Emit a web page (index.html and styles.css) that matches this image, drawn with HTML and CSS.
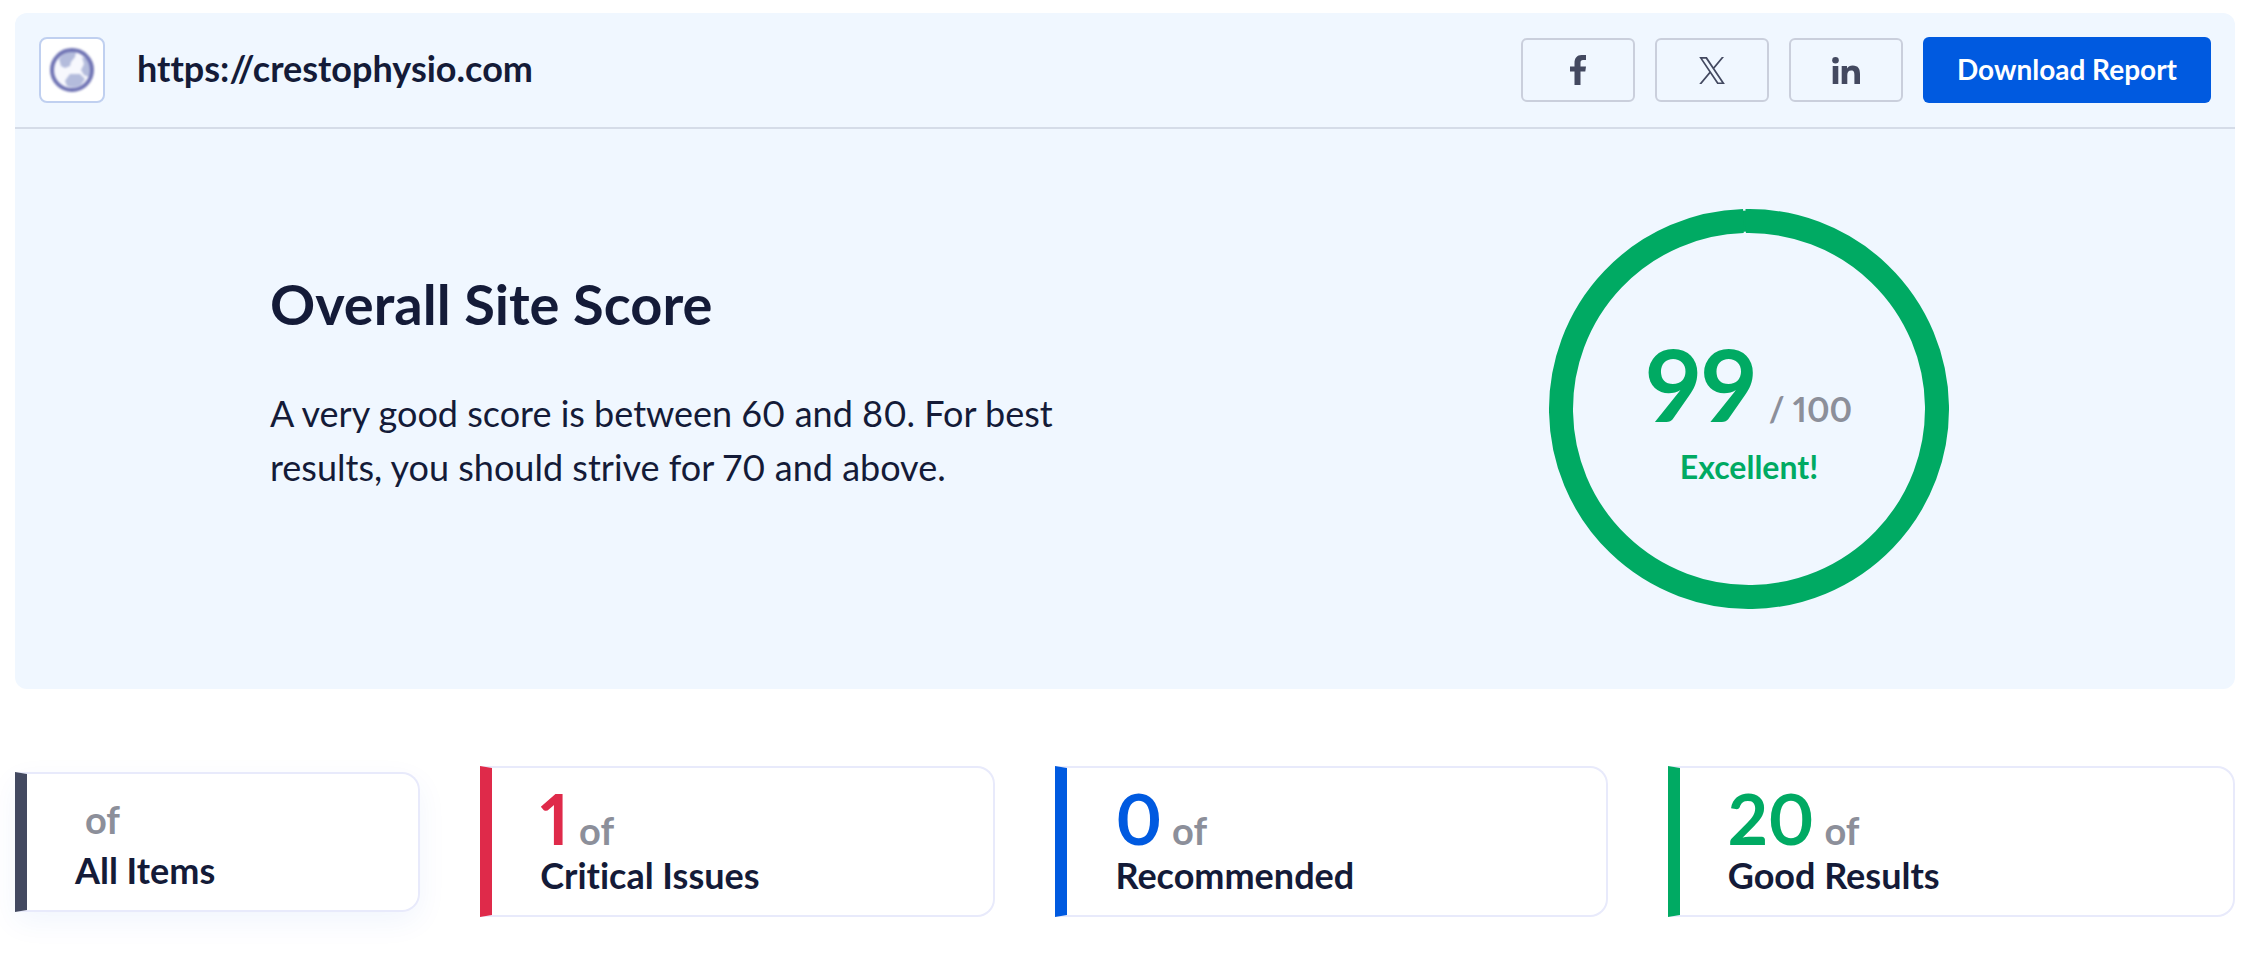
FILE: index.html
```html
<!DOCTYPE html>
<html lang="en">
<head>
<meta charset="utf-8">
<title>Site Report</title>
<link rel="stylesheet" href="styles.css">
</head>
<body>
<main class="report">
  <section class="panel">
    <header class="panel-header">
      <span class="favicon">
        <svg class="globe" viewBox="0 0 50 50" width="50" height="50" aria-hidden="true">
          <circle class="globe-sea" cx="25" cy="25" r="20"/>
          <path class="globe-land" d="M12 14C17 7 24 5 29 7L28 12L24 17L23 21L18 23L14 21ZM35 12L41 14C44 20 45 27 42 32L37 30L34 25L37 19ZM23 29L33 29L38 34L34 40C30 43 24 43 20 41L18 36L20 33Z"/>
          <circle class="globe-ring" cx="25" cy="25" r="20"/>
        </svg>
      </span>
      <h1 class="site-url">https://crestophysio.com</h1>
      <div class="actions">
        <button class="share" type="button" aria-label="Share on Facebook">
          <svg viewBox="0 0 16 30" width="16" height="30" aria-hidden="true"><path d="M4.500 30V16.500H0V11.500H4.500V8C4.500 3 7 0 11.500 0H16V5H13C11.300 5 10.500 6 10.500 7.500V11.500H16L15.300 16.500H10.500V30Z"/></svg>
        </button>
        <button class="share" type="button" aria-label="Share on X">
          <svg viewBox="0 0 26 27" width="26" height="27" aria-hidden="true"><path fill-rule="evenodd" d="M15.500 11.400L25 0H22.800L14.500 9.900L7.900 0H0.200L10.200 15L0.200 27H2.500L11.200 16.500L18.200 27H25.900ZM3.300 1.700H6.800L22.800 25.400H19.300Z"/></svg>
        </button>
        <button class="share" type="button" aria-label="Share on LinkedIn">
          <svg viewBox="0 0 28 27" width="28" height="27" aria-hidden="true"><circle cx="3.500" cy="3.300" r="3.300"/><path d="M0.700 9H6.300V27H0.700ZM9.700 9H15V11.500C16 9.700 18 8.500 20.700 8.500C26.300 8.500 28 12 28 17V27H22.400V18C22.400 15.500 22 13.400 19.200 13.400C16.400 13.400 15.300 15.300 15.300 18V27H9.700Z"/></svg>
        </button>
        <button class="download" type="button">Download Report</button>
      </div>
    </header>
    <div class="score">
      <div class="score-copy">
        <h2 class="score-title">Overall Site Score</h2>
        <p class="score-text">A very good score is between 60 and 80. For best results, you should strive for 70 and above.</p>
      </div>
      <div class="gauge-cell">
        <div class="gauge">
          <svg class="gauge-ring" viewBox="0 0 400 400" aria-hidden="true">
            <circle class="gauge-track" cx="200" cy="200" r="188"/>
            <circle class="gauge-value" cx="200" cy="200" r="188" pathLength="1000" stroke-dasharray="998 2" transform="rotate(-91 200 200)"/>
          </svg>
          <p class="gauge-number"><strong class="gauge-points">99</strong><span class="gauge-total">/ 100</span></p>
          <p class="gauge-label">Excellent!</p>
        </div>
      </div>
    </div>
  </section>
  <section class="cards">
    <article class="card card-all">
      <p class="count"><span class="of">of</span></p>
      <h3 class="card-title">All Items</h3>
    </article>
    <article class="card card-critical">
      <p class="count"><strong class="number">1</strong><span class="of">of</span></p>
      <h3 class="card-title">Critical Issues</h3>
    </article>
    <article class="card card-recommended">
      <p class="count"><strong class="number">0</strong><span class="of">of</span></p>
      <h3 class="card-title">Recommended</h3>
    </article>
    <article class="card card-good">
      <p class="count"><strong class="number">20</strong><span class="of">of</span></p>
      <h3 class="card-title">Good Results</h3>
    </article>
  </section>
</main>
</body>
</html>
```
FILE: styles.css
```css
* {
  box-sizing: border-box;
}

body {
  margin: 0;
  background: #fff;
  color: #141b38;
  font-family: Lato, "Open Sans", sans-serif;
  font-variant-ligatures: none;
  font-variant-numeric: proportional-nums;
}

h1, h2, h3, p {
  margin: 0;
}

.report {
  padding: 13px 13px 48px 15px;
}

.panel {
  background: #f0f7ff;
  border-radius: 12px;
}

.panel-header {
  display: flex;
  align-items: center;
  gap: 32px;
  padding: 24px;
  border-bottom: 2px solid #d5dce8;
}

.favicon {
  display: grid;
  place-items: center;
  width: 66px;
  height: 66px;
  border: 2px solid #c0d0f0;
  border-radius: 8px;
  background: #fff;
}

.globe {
  filter: blur(1px);
}

.globe-sea {
  fill: #f7f8fd;
}

.globe-land {
  fill: #b4bcdc;
}

.globe-ring {
  fill: none;
  stroke: #7074b4;
  stroke-width: 4;
}

.site-url {
  flex: 1;
  padding-bottom: 4px;
  font-size: 36px;
  font-weight: 700;
  line-height: 44px;
}

.actions {
  display: flex;
  align-items: center;
  gap: 20px;
}

.share {
  display: grid;
  place-items: center;
  width: 114px;
  height: 64px;
  padding: 0;
  border: 2px solid #cacfdc;
  border-radius: 6px;
  background: transparent;
}

.share svg {
  fill: #434960;
}

.download {
  height: 66px;
  padding: 0 34px 2px;
  border: 0;
  border-radius: 6px;
  background: #005ae0;
  color: #fff;
  font: 700 28px/34px Lato, "Open Sans", sans-serif;
}

.score {
  display: grid;
  grid-template-columns: 1fr 972px;
  align-items: center;
  padding: 80px 0;
}

.score-copy {
  max-width: 1080px;
  padding: 0 0 54px 255px;
}

.score-title {
  font-size: 56px;
  font-weight: 700;
  line-height: 68px;
}

.score-text {
  margin-top: 48px;
  font-size: 36px;
  line-height: 54px;
}

.gauge-cell {
  display: grid;
  place-items: center;
}

.gauge {
  position: relative;
  display: grid;
  place-items: center;
  align-content: center;
  width: 400px;
  height: 400px;
  padding-top: 8px;
}

.gauge-ring {
  position: absolute;
  inset: 0;
  width: 100%;
  height: 100%;
}

.gauge-track,
.gauge-value {
  fill: none;
  stroke: #00aa63;
}

.gauge-track {
  stroke-width: 21;
}

.gauge-value {
  stroke-width: 24;
}

.gauge-number {
  display: flex;
  align-items: baseline;
  gap: 12px;
  line-height: 96px;
}

.gauge-points {
  color: #00aa63;
  font-size: 100px;
  font-weight: 700;
}

.gauge-total {
  color: #8c8f9a;
  font-size: 34px;
  font-weight: 700;
  line-height: 34px;
}

.gauge-label {
  margin-top: 12px;
  color: #00aa63;
  font-size: 32px;
  font-weight: 700;
  line-height: 48px;
}

.cards {
  display: grid;
  grid-template-columns: 405fr 515fr 552fr 567fr;
  align-items: center;
  gap: 60px;
  margin-top: 77px;
}

.card {
  padding: 20px 48px;
  border: 2px solid #e8eafb;
  border-left: 12px solid;
  border-radius: 0 18px 18px 0;
}

.card-all {
  border-left-color: #434960;
  box-shadow: 0 10px 30px rgba(0, 90, 224, 0.06);
}

.card-critical {
  border-left-color: #df2a4a;
}

.card-recommended {
  border-left-color: #005ae0;
}

.card-good {
  border-left-color: #00aa63;
}

.count {
  display: flex;
  align-items: baseline;
  gap: 10px;
  line-height: 60px;
}

.card-all .count {
  padding-left: 10px;
  line-height: 50px;
}

.number {
  font-size: 70px;
}

.card-critical .number {
  color: #df2a4a;
}

.card-recommended .number {
  color: #005ae0;
}

.card-good .number {
  color: #00aa63;
}

.of {
  color: #8c8f9a;
  font-size: 38px;
  font-weight: 700;
}

.number + .of {
  line-height: 38px;
}

.card-title {
  margin-top: 6px;
  font-size: 36px;
  font-weight: 700;
  line-height: 40px;
}
```
